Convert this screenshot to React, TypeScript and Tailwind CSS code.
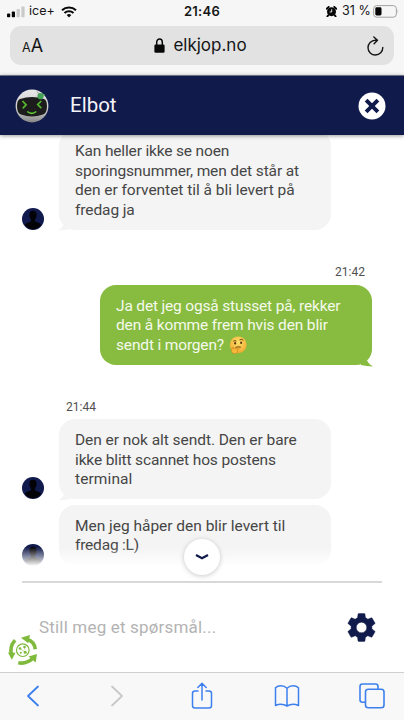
import React from 'react';
import clsx from 'clsx';

type Line = { text: string; className: string };

const leftLines: Line[] = [
  { text: 'Kan heller ikke se noen', className: 'tracking-[-0.16px]' },
  { text: 'sporingsnummer, men det står at', className: 'tracking-[-0.12px]' },
  { text: 'den er forventet til å bli levert på', className: 'tracking-[-0.03px]' },
  { text: 'fredag ja', className: 'tracking-[-0.1px]' },
];

const greenLines: Line[] = [
  { text: 'Ja det jeg også stusset på, rekker', className: 'tracking-[-0.17px]' },
  { text: 'den å komme frem hvis den blir', className: 'tracking-[-0.15px]' },
  { text: 'sendt i morgen?', className: 'tracking-[-0.16px]' },
];

const sentLines: Line[] = [
  { text: 'Den er nok alt sendt. Den er bare', className: 'tracking-[-0.05px]' },
  { text: 'ikke blitt scannet hos postens', className: 'tracking-[-0.14px]' },
  { text: 'terminal', className: 'tracking-[0.1px]' },
];

const hopeLines: Line[] = [
  { text: 'Men jeg håper den blir levert til', className: 'tracking-[-0.02px]' },
  { text: 'fredag :L)', className: 'tracking-[-0.2px]' },
];

const ThinkingFace = () => (
  <svg viewBox="0 0 18 18" className="ml-[5px] size-[18px]">
    <defs>
      <radialGradient id="face" cx="50%" cy="35%" r="65%">
        <stop offset="0" stopColor="#ffe26a" />
        <stop offset="1" stopColor="#f0a830" />
      </radialGradient>
    </defs>
    <circle cx="9.2" cy="8.8" r="8.4" fill="url(#face)" />
    <path d="M4.2 5.2q1.8-1 3.3 0M10.5 4q2-1.3 3.8.1" fill="none" stroke="#6d4714" strokeWidth="1" />
    <ellipse cx="6.1" cy="7.2" rx="1" ry="1.3" fill="#573512" />
    <ellipse cx="12.1" cy="6.8" rx="1" ry="1.3" fill="#573512" />
    <path d="M6.5 11.4q2.5-1.1 5.3-.2" fill="none" stroke="#6d4714" strokeWidth="1" />
    <path d="M3.4 11.3c1-.5 1.4.3 1.3 1.6l4.7-1.1c1.2-.1 1.2 1.2 0 1.5l-1.5.5c1.4 1 .8 3.4-1.3 3.7-2.9.5-4.2-1-4-3.2z" fill="#f6b93a" stroke="#cf7d1c" strokeWidth=".6" />
  </svg>
);

const Avatar = () => (
  <svg viewBox="0 0 22 22" className="size-[22px] shrink-0">
    <circle cx="11" cy="11" r="11" fill="#101a4c" />
    <path d="M11 2.7c-2.5 0-3.8 1.7-3.6 4 .1 2 .6 3.7 1.6 4.8v1.6c-.6 1.3-4.8 1.5-6.1 3.6A10.2 10.2 0 0 0 11 21.2a10.2 10.2 0 0 0 8.1-4.5c-1.3-2.1-5.5-2.3-6.1-3.6v-1.6c1-1.1 1.5-2.8 1.6-4.8.2-2.3-1.1-4-3.6-4z" fill="#020207" />
  </svg>
);

const Bubble: React.FC<{ lines: Line[]; own?: boolean; tail?: boolean; children?: React.ReactNode }> = ({ lines, own, tail = true, children }) => (
  <div className={clsx('relative w-[272px] rounded-[16px] pt-3 pb-[10px] pl-4 text-[15.5px] leading-[19.4px]', own ? 'bg-[#88bc40] text-[#f4f9ec]' : 'bg-[#f4f4f4] text-[#464646]')}>
    {lines.map((l, i) => (
      <div key={l.text} className="flex h-[19.4px] items-center whitespace-nowrap">
        <span className={l.className}>{l.text}</span>
        {i === lines.length - 1 && children}
      </div>
    ))}
    {tail && (
      <svg viewBox="0 0 12 8" className={clsx('absolute -bottom-[1.5px] h-2 w-3', own ? '-right-px' : '-left-px -scale-x-100')}>
        <path d="M6 1.5Q8 5.8 12 7.6Q5 7 0 6V3z" fill={own ? '#88bc40' : '#f4f4f4'} />
      </svg>
    )}
  </div>
);

const Message: React.FC<{ lines: Line[]; tail?: boolean }> = ({ lines, tail }) => (
  <div className="flex items-end gap-[15.5px] pl-[21.5px]">
    <Avatar />
    <Bubble lines={lines} tail={tail} />
  </div>
);

const StatusBar = () => (
  <div className="grid h-[26px] grid-cols-3 items-center px-[7px] pb-[3px] font-[Inter,sans-serif] text-[12.5px] text-[#151515]">
    <div className="flex items-center">
      <svg viewBox="0 0 18 12" className="h-3 w-[18px]">
        <rect x="0" y="7.5" width="3.2" height="3.7" rx=".8" fill="#050505" />
        <rect x="4.8" y="5.5" width="3.2" height="5.7" rx=".8" fill="#050505" />
        <rect x="9.6" y="3" width="3.2" height="8.2" rx=".8" fill="#cacaca" />
        <rect x="14.4" y="0.5" width="3.2" height="10.7" rx=".8" fill="#cacaca" />
      </svg>
      <span className="ml-[4px]">ice+</span>
      <svg viewBox="0 0 16 12" className="ml-[6px] h-3 w-4">
        <path d="M1 4.2a10.3 10.3 0 0 1 14 0M3.5 7a6.7 6.7 0 0 1 9 0" fill="none" stroke="#080808" strokeWidth="2.1" />
        <path d="M5.7 9a3.5 3.5 0 0 1 4.6 0L8 11.6z" fill="#080808" />
      </svg>
    </div>
    <span className="text-center text-[13px] font-semibold tracking-[0.3px]">21:46</span>
    <div className="-mr-[2px] flex items-center justify-end">
      <svg viewBox="0 0 12 12" className="size-[11px]">
        <path d="M2.6 10 1.5 11.3M9.4 10l1.1 1.3M.8 3 3 .9M9 .9 11.2 3" stroke="#080808" strokeWidth="2" strokeLinecap="round" />
        <circle cx="6" cy="6.2" r="4.9" fill="#080808" />
        <path d="M6.2 3.5v3H4" fill="none" stroke="#f6f6f6" strokeWidth="1" />
      </svg>
      <span className="ml-[5px] text-[12.5px] tracking-[0.1px]">31 %</span>
      <svg viewBox="0 0 26 13" className="ml-[2px] h-[13px] w-[26px]">
        <rect x=".6" y=".6" width="22.8" height="11.6" rx="3.2" fill="none" stroke="#a3a3a3" />
        <rect x="2.3" y="2.3" width="6.2" height="8.2" rx="1.4" fill="#050505" />
        <path d="M24.6 4.6q1.3 1.8 0 3.6z" fill="#a3a3a3" />
      </svg>
    </div>
  </div>
);

const AddressBar = () => (
  <div className="mx-[10px] flex h-[39px] items-center justify-between rounded-[11px] bg-[#e2e2e2] pr-[10px] pl-[12px] font-[Inter,sans-serif] text-[#151515]">
    <div className="flex w-[134px] items-baseline">
      <span className="text-[12.5px] leading-none">A</span>
      <span className="text-[18px] leading-none">A</span>
    </div>
    <div className="-ml-[5px] flex items-center">
      <svg viewBox="0 0 11 15" className="h-[15px] w-[11px]">
        <path d="M2.7 7V4.2a2.8 3.2 0 0 1 5.6 0V7" fill="none" stroke="#080808" strokeWidth="1.5" />
        <rect x=".4" y="6.5" width="10.2" height="8.2" rx="1.3" fill="#080808" />
      </svg>
      <span className="ml-[8px] text-[17px] leading-none">elkjop.no</span>
    </div>
    <div className="flex w-[134px] justify-end">
      <svg viewBox="0 0 18 20" className="h-5 w-[18px]" fill="none" stroke="#151515" strokeWidth="1.4" strokeLinecap="round" strokeLinejoin="round">
        <path d="M10.5 4.2H9.3A7.4 7.4 0 1 0 16.8 11.5M7.8 1l3.7 3.3-3.4 3.4" />
      </svg>
    </div>
  </div>
);

const BotLogo = () => (
  <svg viewBox="0 0 34 34" className="size-[34px]">
    <defs>
      <linearGradient id="helmet" x1="0" y1="0" x2="0" y2="1">
        <stop offset="0" stopColor="#e8e8e8" />
        <stop offset=".65" stopColor="#c8c8c8" />
        <stop offset="1" stopColor="#858585" />
      </linearGradient>
    </defs>
    <circle cx="17" cy="17" r="16.4" fill="url(#helmet)" />
    <path d="M5 10Q17 6 29 10Q32 11 32 17Q32 24 28 25.5Q17 29.5 6 25.5Q2 24 2 17Q2 11 5 10z" fill="#1b1c1b" />
    <path d="m7.5 12 3.6 3.8-3.3 3.5M26.2 12l-3.5 3.5 3.6 3.7" fill="none" stroke="#55b82f" strokeWidth="1.7" />
    <path d="M12.3 22.5q4.5 3.8 9 0" fill="none" stroke="#63c832" strokeWidth="1.6" />
    <path d="m22 2.5 3.5 4" stroke="#7e7e7e" strokeWidth=".8" />
    <circle cx="25.5" cy="7.2" r="3.1" fill="#45a058" />
    <circle cx="29" cy="5.8" r=".9" fill="#55ab54" />
  </svg>
);

const ChatHeader = () => (
  <header className="relative z-10 flex h-[60px] items-center border-t border-[#6d7186] bg-[#111b4b] pr-[18px] pl-[15px] shadow-[0_1px_4px_rgba(0,0,0,0.4)]">
    <BotLogo />
    <h1 className="ml-[21px] text-[20.5px] leading-none text-[#f4f4f8]">Elbot</h1>
    <svg viewBox="0 0 28 28" className="ml-auto size-7">
      <circle cx="14" cy="14" r="13.5" fill="#fff" />
      <path d="m8.1 8.1 11.8 11.8M19.9 8.1 8.1 19.9" stroke="#111b4b" strokeWidth="3.9" />
    </svg>
  </header>
);

const RecycleBadge = () => (
  <svg viewBox="0 0 30 30" className="absolute top-[635px] left-[8px] size-[30px]">
    <g fill="none" stroke="#7fba3d" strokeWidth="3.6">
      <path d="M19 4.2Q26.5 6.5 27.3 14.3" />
      <path d="M7.2 5.3Q1.7 10.5 3.3 19" />
      <path d="M10.3 27.7Q18.5 29.5 25.5 22.8" />
    </g>
    <path d="M13 2.7 22 0l-1.7 8.2zM0 17.5l7.5.3-3.7 7zM20.5 21.5l8.5-2.4-1.3 8.5z" fill="#7fba3d" />
    <circle cx="14.8" cy="15.2" r="6.3" fill="#fff" stroke="#7fba3d" strokeWidth="1.2" />
    <g fill="#7fba3d">
      <circle cx="12" cy="13.5" r="1.3" />
      <circle cx="16.5" cy="12" r="1.3" />
      <circle cx="12.8" cy="17.7" r="1" />
      <circle cx="17.2" cy="17.3" r="1.5" />
    </g>
    <path d="m12 13.5 5.2 3.8M16.5 12v2.5" stroke="#7fba3d" strokeWidth=".5" />
  </svg>
);

const Composer = () => (
  <div className="mx-[22px] flex h-[91px] items-center justify-between border-t-2 border-[#d8d8d8] pr-[6px] pl-[17px]">
    <span className="text-[17px] tracking-[0.18px] text-[#b3b3b3]">Still meg et spørsmål...</span>
    <svg viewBox="2 2 20 20" className="size-[29px]" fill="#111b4b" stroke="#111b4b" strokeWidth=".3" strokeLinejoin="round">
      <path d="M19.14 12.94c.04-.3.06-.61.06-.94 0-.32-.02-.64-.07-.94l2.03-1.58c.18-.14.23-.41.12-.61l-1.92-3.32c-.12-.22-.37-.29-.59-.22l-2.39.96c-.5-.38-1.03-.7-1.62-.94l-.36-2.54c-.04-.24-.24-.41-.48-.41h-3.84c-.24 0-.43.17-.47.41l-.36 2.54c-.59.24-1.13.57-1.62.94l-2.39-.96c-.22-.08-.47 0-.59.22L2.74 8.87c-.12.21-.08.47.12.61l2.03 1.58c-.05.3-.09.63-.09.94s.02.64.07.94l-2.03 1.58c-.18.14-.23.41-.12.61l1.92 3.32c.12.22.37.29.59.22l2.39-.96c.5.38 1.03.7 1.62.94l.36 2.54c.05.24.24.41.48.41h3.84c.24 0 .44-.17.47-.41l.36-2.54c.59-.24 1.13-.56 1.62-.94l2.39.96c.22.08.47 0 .59-.22l1.92-3.32c.12-.22.07-.47-.12-.61zM12 15.6A3.6 3.6 0 1 1 12 8.4a3.6 3.6 0 0 1 0 7.2" />
    </svg>
  </div>
);

const Toolbar = () => (
  <nav className="flex h-12 items-center border-t border-[#cfcfcf] bg-[#f8f8f8] pb-px pl-[26px]">
    <svg viewBox="0 0 14 22" className="h-[22px] w-[14px]" fill="none" stroke="#3d80ed" strokeWidth="1.8" strokeLinecap="round" strokeLinejoin="round"><path d="M12 1.5 2 11l10 9.5" /></svg>
    <svg viewBox="0 0 14 22" className="ml-[70px] h-[22px] w-[14px]" fill="none" stroke="#c8c8c8" strokeWidth="1.8" strokeLinecap="round" strokeLinejoin="round"><path d="m2 1.5 10 9.5-10 9.5" /></svg>
    <svg viewBox="0 0 22 28" className="ml-[67px] h-7 w-[22px]" fill="none" stroke="#3d80ed" strokeWidth="1.5" strokeLinecap="round" strokeLinejoin="round"><path d="M7 9H4Q1.5 9 1.5 11.5v12Q1.5 26 4 26h14q2.5 0 2.5-2.5v-12Q20.5 9 18 9h-3M11 18V1.5M6.8 5.5 11 1.3l4.2 4.2" /></svg>
    <svg viewBox="0 0 26 24" className="ml-[61px] h-6 w-[26px]" fill="none" stroke="#3d80ed" strokeWidth="1.5" strokeLinejoin="round"><path d="M13 4.2Q10.5 1.8 7 1.8Q3.5 1.8 1.5 3.8v17.7q6-2.5 11.5.5 5.5-3 11.5-.5V3.8Q22.5 1.8 19 1.8Q15.5 1.8 13 4.2V22" /></svg>
    <svg viewBox="0 0 26 26" className="ml-[59px] size-[26px]" fill="none" stroke="#3d80ed" strokeWidth="1.6"><path d="M6.5 19.2H3.5Q1 19.2 1 16.7V3.5Q1 1 3.5 1h13Q19 1 19 3.5v2.8" /><rect x="6.5" y="6.3" width="18.5" height="18.5" rx="2.7" /></svg>
  </nav>
);

const App: React.FC = () => (
  <div className="relative flex h-[720px] w-[404px] flex-col overflow-hidden bg-white font-[Roboto,sans-serif]">
    <div className="h-[75px] shrink-0 bg-[#f6f6f6]">
      <StatusBar />
      <AddressBar />
    </div>
    <ChatHeader />

    <main className="relative flex h-[446px] flex-col overflow-hidden">
      <div className="-mt-[4.6px]">
        <Message lines={leftLines} />
      </div>
      <div className="mt-[34px] flex flex-col items-end pr-[32px]">
        <time className="mr-[7px] text-[12px] leading-4 text-[#505050]">21:42</time>
        <div className="mt-[5px]">
          <Bubble lines={greenLines} own>
            <ThinkingFace />
          </Bubble>
        </div>
      </div>
      <time className="mt-[34px] ml-[66px] text-[12px] leading-4 text-[#505050]">21:44</time>
      <div className="mt-[4px] flex flex-col gap-[5.5px]">
        <Message lines={sentLines} />
        <Message lines={hopeLines} tail={false} />
      </div>
      <div className="absolute inset-x-0 bottom-[10px] h-[24px] bg-linear-to-b from-transparent to-white to-80%" />
      <button className="absolute bottom-[6px] left-[184px] flex size-9 items-center justify-center rounded-full bg-white shadow-[0_1px_5px_rgba(0,0,0,0.22)]">
        <svg viewBox="0 0 14 8" className="h-2 w-[14px]" fill="none" stroke="#111b4b" strokeWidth="2.2"><path d="m1 2 6 3.2L13 2" /></svg>
      </button>
    </main>

    <Composer />
    <Toolbar />
    <RecycleBadge />
  </div>
);

export default App;
